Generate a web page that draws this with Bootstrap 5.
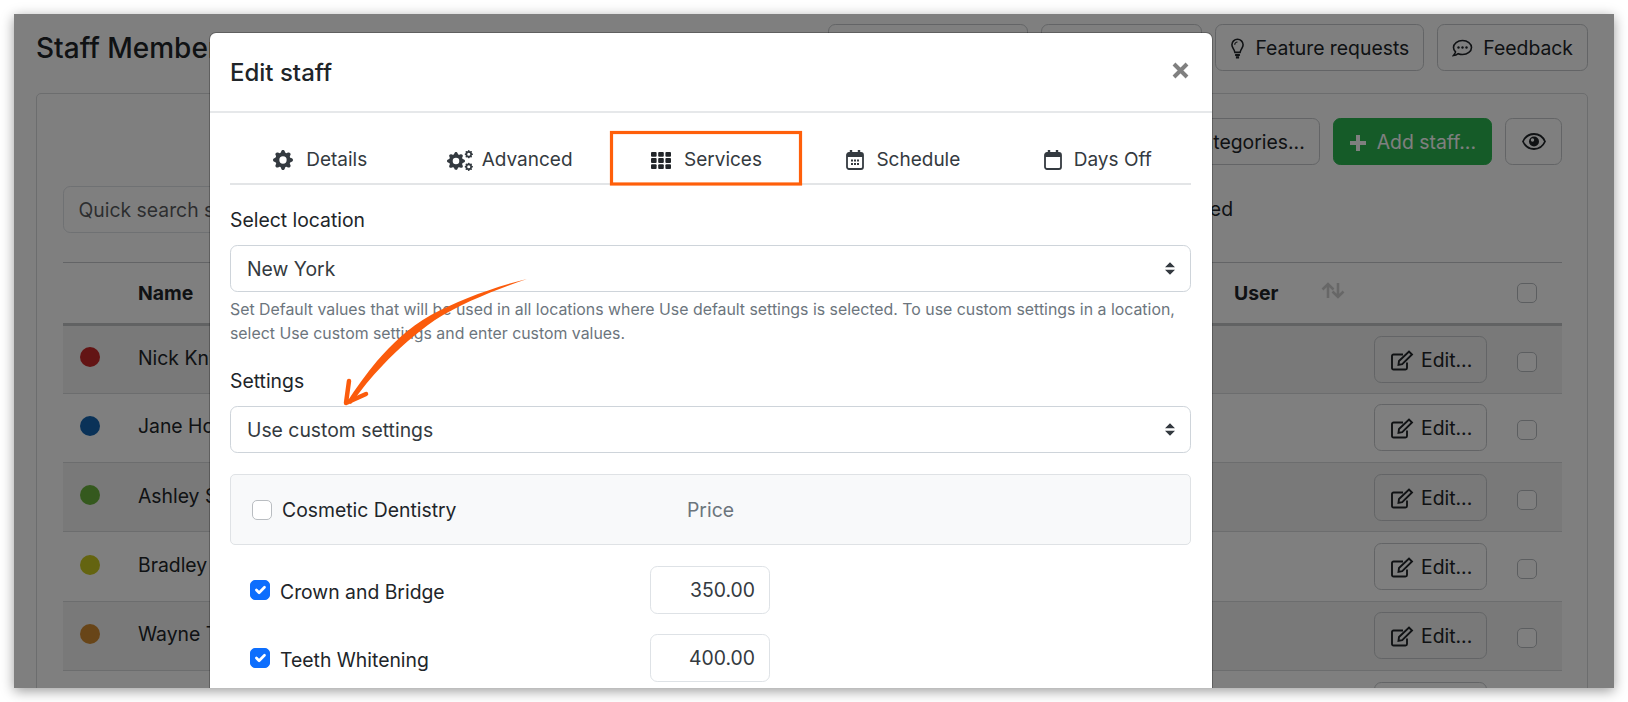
<!DOCTYPE html>
<html lang="en">
<head>
<meta charset="utf-8">
<title>Edit staff</title>
<link href="https://cdn.jsdelivr.net/npm/bootstrap@5.3.0/dist/css/bootstrap.min.css" rel="stylesheet">
<style>
html{font-size:19.36px}
body{background:#fff;font-family:Inter,"Liberation Sans",sans-serif;color:#212529;font-size:19.36px;overflow:hidden}
.app-window{position:relative;width:1600px;height:674px;margin:14px;overflow:hidden;background:#fff;box-shadow:0 3px 12px rgba(0,0,0,.4);padding:10px 26px 0 22px}
.app-title{font-size:28px;font-weight:500;margin:0;padding-top:3px;white-space:nowrap}
.top-btn{height:47px;padding:2px 14px 0;font-size:19.36px;display:inline-flex;align-items:center;gap:10px;border-color:#c6c9cc;color:#212529;white-space:nowrap;overflow:hidden}
.top-btn svg{flex:none}
.btn-row{column-gap:13px}
.hidden-a{width:200px}
.hidden-b{width:161px}
.app-card{margin-top:22px;border:1px solid #d8dadc;border-radius:5px;padding:24px 25px 0 26px;height:620px}
.add-btn{background:#2ab750;border-color:#2ab750;color:#fff;padding:2px 15px 0}
.eye-btn{width:57px;padding:0;justify-content:center}
.quick-search{width:420px;height:47px;font-size:19.36px}
.filter-row{margin-top:21px}
.archived-text{margin-right:329px}
.app-table{border-top:1px solid #c6c9cc;margin-top:29px}
.staff-table{width:100%;margin:0;--bs-table-striped-bg:rgba(0,0,0,.05)}
.staff-table th,.staff-table td{height:69.3px;vertical-align:middle;padding:0;font-size:19.36px;border-color:#d8dadc}
.staff-table thead th{height:61px;padding-top:1px;font-weight:700;border-bottom:3px solid #c2c4c6}
.dot-cell{width:75px;padding-left:17px!important}
.name-cell{padding-bottom:2px!important}
.staff-dot{display:block;width:20px;height:20px;border-radius:50%}
.dot-cell .staff-dot{margin-bottom:4px}
.edit-btn{width:113px;height:47px;padding:2px 0 0 16px;gap:7px}
.user-cell{width:140px}
.sort-mark{margin-left:43px;margin-top:-6px}
.tick-cell{width:75px}
.edit-cell{width:113px}
.tick-wrap{display:flex;justify-content:flex-end;padding-right:25px}
tbody .tick-wrap{padding-top:5px}
.form-check-input{width:20px;height:20px;margin:0;border-color:#b9bdc1;flex:none;display:block;border-radius:5px!important}
.dim-layer{position:absolute;inset:0;background:rgba(0,0,0,.5);z-index:10}
.edit-modal{position:absolute;left:196px;top:19px;width:1002px;height:700px;z-index:20;border:0;border-radius:6px 6px 0 0;box-shadow:0 0 0 1px rgba(0,0,0,.25);background:#fff}
.edit-modal .modal-header{height:80px;padding:1px 23px 0 20px;border-bottom:2px solid #e6e8ea}
.edit-modal .modal-title{font-size:24px;font-weight:500}
.edit-modal .modal-body{padding:18px 21px 19px 20px}
.close-mark{margin-top:-4px}
.tab-row{border-bottom:2px solid #e3e5e7;height:54px}
.tab-row .nav-link{color:#343a40;font-size:19px;padding:4px 0 0;display:flex;align-items:center;justify-content:center;gap:12px;height:54px;white-space:nowrap}
.tab-row .gear-gap{gap:9px;padding-left:1px}
.tab-row .details-gap{gap:13px;padding-left:4px}
.tab-row .services-tab{gap:13px;padding-right:6px}
.tab-row .schedule-tab{padding-right:5px}
.field-label{display:block;margin:0 0 12px;font-size:19.36px;line-height:26px}
.first-label{margin-top:22px}
.edit-modal .form-select{height:47px;font-size:19.36px;border-color:#ced4da;color:#343a40;padding-left:16px;padding-top:9px;background-image:url("data:image/svg+xml,%3csvg xmlns='http://www.w3.org/2000/svg' viewBox='0 0 4 5'%3e%3cpath fill='%23343a40' d='M2 0L0 2h4zm0 5L0 3h4z'/%3e%3c/svg%3e");background-size:10px 13px;background-position:right 15px center}
.help-line{font-size:15.87px;line-height:24px;color:#6c757d;margin:6px 0 22px}
.group-box{height:71px;margin-top:21px;background:#f8f9fa;border:1px solid #dfe2e5;border-radius:5px;padding:0 21px;font-size:19.36px}
.group-name{width:405px;margin-left:10px;color:#212529;padding-top:3px}
.price-head{color:#6c757d;padding-top:3px}
.svc-row{height:48px;margin-top:20px;padding-left:20px;font-size:19.36px}
.first-svc{margin-top:21px}
.svc-name{width:370px;margin-left:10px;padding-top:6px}
.price-input{width:120px;height:48px;text-align:right;font-size:19.36px;color:#343a40;padding-right:14px}
.mark-layer{position:absolute;left:-14px;top:-14px;width:1628px;height:702px;z-index:30;pointer-events:none}
</style>
</head>
<body>
<svg width="0" height="0" class="d-none">
  <symbol id="edit-ico" viewBox="0 0 23 21"><g fill="none" stroke="#212529" stroke-width="1.900"><path d="M16 12.500v5.500a1.500 1.500 0 0 1-1.500 1.500h-12A1.500 1.500 0 0 1 1 18V6a1.500 1.500 0 0 1 1.500-1.500H12"/><path d="M8 11 18 1.500l3 3-9.800 9.700-3.700.7z"/></g></symbol>
  <symbol id="gear-ico" viewBox="0 0 16 16"><path d="M9.405 1.05c-.413-1.4-2.397-1.4-2.81 0l-.1.34a1.464 1.464 0 0 1-2.105.872l-.31-.17c-1.283-.698-2.686.705-1.987 1.987l.169.311c.446.82.023 1.841-.872 2.105l-.34.1c-1.4.413-1.4 2.397 0 2.81l.34.1a1.464 1.464 0 0 1 .872 2.105l-.17.31c-.698 1.283.705 2.686 1.987 1.987l.311-.169a1.464 1.464 0 0 1 2.105.872l.1.34c.413 1.4 2.397 1.4 2.81 0l.1-.34a1.464 1.464 0 0 1 2.105-.872l.31.17c1.283.698 2.686-.705 1.987-1.987l-.169-.311a1.464 1.464 0 0 1 .872-2.105l.34-.1c1.4-.413 1.4-2.397 0-2.81l-.34-.1a1.464 1.464 0 0 1-.872-2.105l.17-.31c.698-1.283-.705-2.686-1.987-1.987l-.311.169a1.464 1.464 0 0 1-2.105-.872l-.1-.34zM8 10.930a2.929 2.929 0 1 1 0-5.860 2.929 2.929 0 0 1 0 5.858z"/></symbol>
</svg>
<div class="app-window">
  <div class="d-flex justify-content-between align-items-center">
    <h3 class="app-title">Staff Members</h3>
    <div class="d-flex btn-row">
      <button class="btn btn-outline-secondary top-btn hidden-a" type="button">Video tutorials</button>
      <button class="btn btn-outline-secondary top-btn hidden-b" type="button">Documentation</button>
      <button class="btn btn-outline-secondary top-btn" type="button"><svg width="15" height="21" viewBox="0 0 14 21" fill="none" stroke="#212529" stroke-width="1.600"><path d="M7 1.200a5.600 5.600 0 0 0-5.600 5.600c0 3 2.300 4.200 3 7.600h5.200c.7-3.400 3-4.600 3-7.600A5.600 5.600 0 0 0 7 1.200z"/><path d="M7 4a2.800 2.800 0 0 0-2.800 2.800" stroke-width="1.200"/><path d="M4.600 17h4.800M5.400 19.400h3.200" stroke-width="2.200"/></svg>Feature requests</button>
      <button class="btn btn-outline-secondary top-btn" type="button"><svg width="21" height="19" viewBox="0 0 21 19" fill="none" stroke="#212529" stroke-width="1.600"><path d="M10.500 1.500C5.500 1.500 1.500 4.600 1.500 8.500c0 1.700.8 3.200 2 4.400-.3 1.400-1.200 2.600-2 3.600 1.700-.1 3.500-.9 4.700-1.800 1.300.5 2.800.8 4.300.8 5 0 9-3.100 9-7s-4-7-9-7z"/><circle cx="6.500" cy="8.500" r="1.200" fill="#212529" stroke="none"/><circle cx="10.500" cy="8.500" r="1.200" fill="#212529" stroke="none"/><circle cx="14.500" cy="8.500" r="1.200" fill="#212529" stroke="none"/></svg>Feedback</button>
    </div>
  </div>
  <div class="app-card">
    <div class="d-flex justify-content-end btn-row">
      <button class="btn btn-outline-secondary top-btn" type="button">Staff categories...</button>
      <button class="btn top-btn add-btn" type="button"><svg width="18" height="18" viewBox="0 0 18 18"><path d="M9 1v16M1 9h16" stroke="#fff" stroke-width="4"/></svg>Add staff...</button>
      <button class="btn btn-outline-secondary top-btn eye-btn" type="button"><svg width="24" height="17" viewBox="0 0 24 17"><path d="M12 1C7 1 3 4 1 8.500c2 4.500 6 7.500 11 7.500s9-3 11-7.500C21 4 17 1 12 1z" fill="none" stroke="#212529" stroke-width="1.800"/><circle cx="12" cy="8.500" r="5" fill="#212529"/><circle cx="10.500" cy="7" r="1.700" fill="#fff"/></svg></button>
    </div>
    <div class="d-flex align-items-center justify-content-between filter-row">
      <input class="form-control quick-search" type="text" placeholder="Quick search staff member">
      <span class="archived-text">Show archived</span>
    </div>
    <div class="app-table">
      <table class="table table-striped staff-table">
        <thead>
          <tr>
            <th class="dot-cell"></th>
            <th>Name</th>
            <th class="user-cell"><span class="d-flex align-items-center">User<svg class="sort-mark" width="24" height="17" viewBox="0 0 24 17" fill="none" stroke="#cfcfcf" stroke-width="2.600"><path d="M7 16V2M1.500 7.500 7 2l5.500 5.500M17 1v14M11.500 9.500 17 15l5.500-5.500"/></svg></span></th>
            <th class="edit-cell"></th>
            <th class="tick-cell"><div class="tick-wrap"><input class="form-check-input" type="checkbox"></div></th>
          </tr>
        </thead>
        <tbody>
          <tr><td class="dot-cell"><i class="staff-dot" style="background:#c62828"></i></td><td class="name-cell">Nick Knight</td><td></td><td><button class="btn btn-outline-secondary top-btn edit-btn" type="button"><svg width="23" height="21"><use href="#edit-ico"/></svg>Edit...</button></td><td><div class="tick-wrap"><input class="form-check-input" type="checkbox"></div></td></tr>
          <tr><td class="dot-cell"><i class="staff-dot" style="background:#1565b0"></i></td><td class="name-cell">Jane Howard</td><td></td><td><button class="btn btn-outline-secondary top-btn edit-btn" type="button"><svg width="23" height="21"><use href="#edit-ico"/></svg>Edit...</button></td><td><div class="tick-wrap"><input class="form-check-input" type="checkbox"></div></td></tr>
          <tr><td class="dot-cell"><i class="staff-dot" style="background:#6bb33c"></i></td><td class="name-cell">Ashley Stamp</td><td></td><td><button class="btn btn-outline-secondary top-btn edit-btn" type="button"><svg width="23" height="21"><use href="#edit-ico"/></svg>Edit...</button></td><td><div class="tick-wrap"><input class="form-check-input" type="checkbox"></div></td></tr>
          <tr><td class="dot-cell"><i class="staff-dot" style="background:#c8c820"></i></td><td class="name-cell">Bradley Tannen</td><td></td><td><button class="btn btn-outline-secondary top-btn edit-btn" type="button"><svg width="23" height="21"><use href="#edit-ico"/></svg>Edit...</button></td><td><div class="tick-wrap"><input class="form-check-input" type="checkbox"></div></td></tr>
          <tr><td class="dot-cell"><i class="staff-dot" style="background:#d08a30"></i></td><td class="name-cell">Wayne Turner</td><td></td><td><button class="btn btn-outline-secondary top-btn edit-btn" type="button"><svg width="23" height="21"><use href="#edit-ico"/></svg>Edit...</button></td><td><div class="tick-wrap"><input class="form-check-input" type="checkbox"></div></td></tr>
          <tr><td class="dot-cell"></td><td></td><td></td><td><button class="btn btn-outline-secondary top-btn edit-btn" type="button" aria-label="Edit"></button></td><td></td></tr>
        </tbody>
      </table>
    </div>
  </div>

  <div class="dim-layer"></div>

  <div class="modal-content edit-modal">
    <div class="modal-header">
      <h5 class="modal-title">Edit staff</h5>
      <svg class="close-mark" width="17" height="17" viewBox="0 0 17 17"><path d="M2 2l13 13M15 2L2 15" stroke="#808080" stroke-width="4"/></svg>
    </div>
    <div class="modal-body">
      <ul class="nav nav-fill tab-row">
        <li class="nav-item"><a class="nav-link details-gap" href="#"><svg width="20" height="20" fill="#343a40"><use href="#gear-ico"/></svg>Details</a></li>
        <li class="nav-item"><a class="nav-link gear-gap" href="#"><svg width="26" height="21" viewBox="0 0 26 21" fill="#343a40"><use href="#gear-ico" x="0" y="2" width="18" height="18"/><use href="#gear-ico" x="17.500" y="0" width="8.500" height="8.500"/><use href="#gear-ico" x="17.500" y="12.500" width="8.500" height="8.500"/></svg>Advanced</a></li>
        <li class="nav-item"><a class="nav-link services-tab" href="#"><svg width="20" height="17" viewBox="0 0 20 17" fill="#212529"><rect x="0" y="0" width="5.600" height="4.800" rx="1"/><rect x="7.200" y="0" width="5.600" height="4.800" rx="1"/><rect x="14.400" y="0" width="5.600" height="4.800" rx="1"/><rect x="0" y="6.100" width="5.600" height="4.800" rx="1"/><rect x="7.200" y="6.100" width="5.600" height="4.800" rx="1"/><rect x="14.400" y="6.100" width="5.600" height="4.800" rx="1"/><rect x="0" y="12.200" width="5.600" height="4.800" rx="1"/><rect x="7.200" y="12.200" width="5.600" height="4.800" rx="1"/><rect x="14.400" y="12.200" width="5.600" height="4.800" rx="1"/></svg>Services</a></li>
        <li class="nav-item"><a class="nav-link schedule-tab" href="#"><svg width="18" height="20" viewBox="0 0 18 20"><rect x="1" y="3" width="16" height="16" rx="2" fill="none" stroke="#343a40" stroke-width="1.800"/><path d="M1 7h16V4H1z" fill="#343a40"/><path d="M5 0v4M13 0v4" stroke="#343a40" stroke-width="2.400"/><path d="M5 10.500h2M8 10.500h2M11 10.500h2M5 14h2M8 14h2M11 14h2" stroke="#343a40" stroke-width="1.800"/></svg>Schedule</a></li>
        <li class="nav-item"><a class="nav-link" href="#"><svg width="18" height="20" viewBox="0 0 18 20"><rect x="1" y="3" width="16" height="16" rx="2" fill="none" stroke="#343a40" stroke-width="1.800"/><path d="M1 7h16V4H1z" fill="#343a40"/><path d="M5 0v4M13 0v4" stroke="#343a40" stroke-width="2.400"/></svg>Days Off</a></li>
      </ul>
      <label class="field-label first-label">Select location</label>
      <select class="form-select"><option>New York</option></select>
      <p class="help-line">Set Default values that will be used in all locations where Use default settings is selected. To use custom settings in a location, select Use custom settings and enter custom values.</p>
      <label class="field-label">Settings</label>
      <select class="form-select"><option>Use custom settings</option></select>
      <div class="group-box d-flex align-items-center">
        <input class="form-check-input" type="checkbox">
        <span class="group-name">Cosmetic Dentistry</span>
        <span class="price-head">Price</span>
      </div>
      <div class="svc-row first-svc d-flex align-items-center">
        <input class="form-check-input" type="checkbox" checked>
        <span class="svc-name">Crown and Bridge</span>
        <input class="form-control price-input" type="text" value="350.00">
      </div>
      <div class="svc-row d-flex align-items-center">
        <input class="form-check-input" type="checkbox" checked>
        <span class="svc-name">Teeth Whitening</span>
        <input class="form-control price-input" type="text" value="400.00">
      </div>
    </div>
  </div>

  <svg class="mark-layer" viewBox="0 0 1628 702">
    <rect x="611.500" y="132.500" width="189" height="51.500" fill="none" stroke="#ff5f0a" stroke-width="3.200"/>
    <path d="M527 279C490 288 458 301 431 315C408 328 392 344 377 361C366 374 356 388 347 402L351 404C361 390 371 377 383 365C398 349 415 334 435 320C462 303 495 290 527 279Z" fill="#fb5b0c"/>
    <path d="M349 381L346 403L366 394" fill="none" stroke="#fb5b0c" stroke-width="4.500" stroke-linecap="round" stroke-linejoin="round"/>
  </svg>
</div>
<script src="https://cdn.jsdelivr.net/npm/bootstrap@5.3.0/dist/js/bootstrap.bundle.min.js"></script>
</body>
</html>
